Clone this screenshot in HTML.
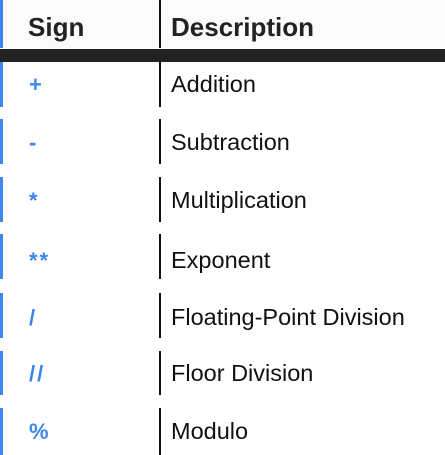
<!DOCTYPE html>
<html><head><style>
body{margin:0;width:445px;height:455px;background:#fff;position:relative;overflow:hidden;font-family:"Liberation Sans",sans-serif}
.hdr{position:absolute;left:0;top:0;width:445px;height:48px;background:#fbfbfb}
.bar{position:absolute;left:0;top:49px;width:445px;height:13px;background:#222}
.b{position:absolute;left:0;width:3px;background:#3d86f0}
.v{position:absolute;left:159px;width:2px;background:#111}
.t{position:absolute;font-size:23.5px;color:#111;line-height:26px}
.s{position:absolute;left:29px;font-size:22px;color:#3d86f0;font-weight:bold;line-height:26px;letter-spacing:2px}
.h{position:absolute;font-size:26px;font-weight:bold;color:#222;top:12px;line-height:30px}
</style></head><body>
<div class="hdr"></div>
<div class="b" style="top:0;height:48px"></div>
<div class="v" style="top:0;height:48px"></div>
<div class="h" style="left:28px">Sign</div>
<div class="h" style="left:171px">Description</div>
<div class="bar"></div>

<div class="b" style="top:62px;height:45px"></div><div class="v" style="top:62px;height:45px"></div>
<div class="s" style="top:72px">+</div><div class="t" style="left:171px;top:71px">Addition</div>

<div class="b" style="top:119px;height:45px"></div><div class="v" style="top:119px;height:45px"></div>
<div class="s" style="top:130px">-</div><div class="t" style="left:171px;top:129px">Subtraction</div>

<div class="b" style="top:177px;height:45px"></div><div class="v" style="top:177px;height:45px"></div>
<div class="s" style="top:188px">*</div><div class="t" style="left:171px;top:187px">Multiplication</div>

<div class="b" style="top:234px;height:45px"></div><div class="v" style="top:234px;height:45px"></div>
<div class="s" style="top:248px">**</div><div class="t" style="left:171px;top:247px">Exponent</div>

<div class="b" style="top:293px;height:45px"></div><div class="v" style="top:293px;height:45px"></div>
<div class="s" style="top:305px">/</div><div class="t" style="left:171px;top:304px">Floating-Point Division</div>

<div class="b" style="top:351px;height:44px"></div><div class="v" style="top:351px;height:44px"></div>
<div class="s" style="top:361px">//</div><div class="t" style="left:171px;top:360px">Floor Division</div>

<div class="b" style="top:408px;height:47px"></div><div class="v" style="top:408px;height:47px"></div>
<div class="s" style="top:419px">%</div><div class="t" style="left:171px;top:418px">Modulo</div>
</body></html>
